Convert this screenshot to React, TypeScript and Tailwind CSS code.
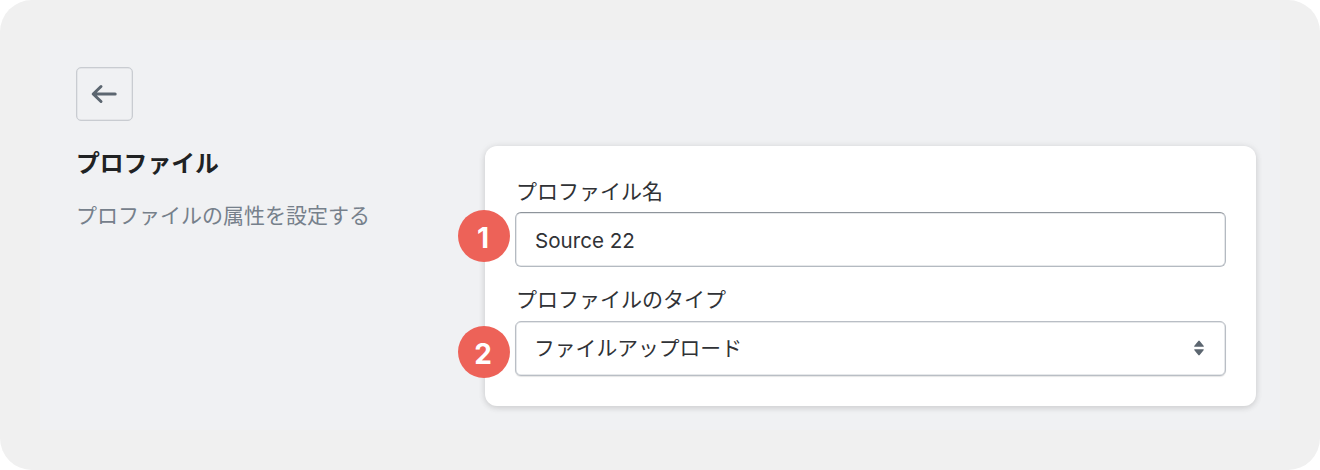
import type { ReactNode } from "react";

type FieldProps = {
    label: string;
    labelClass: string;
    children: ReactNode;
};

const Badge = ({ num, className }: { num: number; className: string }) => {
    return (
        <div
            className={`absolute left-[-57px] flex h-[52px] w-[52px] items-center justify-center rounded-full bg-[#ed6258] pr-0.5 pt-1 text-[28px] font-bold leading-none text-white ${className}`}
        >
            {num}
        </div>
    );
};

const Field = ({ label, labelClass, children }: FieldProps) => {
    return (
        <div>
            <div className={`h-7 pl-px leading-7 text-[#303236] ${labelClass}`}>{label}</div>
            <div className="relative">{children}</div>
        </div>
    );
};

const App = () => {
    return (
        <div className="h-[470px] w-[1320px] bg-white font-['Inter','Noto_Sans_CJK_JP',sans-serif] text-[21px]">
            <div className="h-full rounded-[32px] bg-[#f0f0f0] p-10">
                <div className="h-[390px] bg-[#f0f1f3] pl-9 pr-6 pt-[27px]">
                    <button
                        type="button"
                        aria-label="戻る"
                        className="flex h-[54px] w-[57px] items-center justify-center rounded-[5px] border border-[#c9ccd1] pr-0.5 shadow-[inset_0_0_0_0.5px_#d8dade]"
                    >
                        <svg width="26" height="20" viewBox="0 0 26 20" fill="none" className="text-[#5c6670]">
                            <path
                                d="M10 2.5 2.2 10l7.8 7.5M2.6 10h21.6"
                                stroke="currentColor"
                                strokeWidth="3"
                                strokeLinecap="round"
                                strokeLinejoin="round"
                            />
                        </svg>
                    </button>

                    <div className="mt-[25px] flex justify-between">
                        <div>
                            <h1 className="h-9 text-[23.8px] font-bold leading-9 text-[#202223]">プロファイル</h1>
                            <p className="mt-[18px] leading-8 text-[#76808b]">プロファイルの属性を設定する</p>
                        </div>

                        <div className="flex h-[260px] w-[771px] flex-col gap-[19px] rounded-xl bg-white pl-[30px] pr-[30px] pt-8 shadow-[0_0_8px_rgba(23,24,24,0.06),0_2px_6px_rgba(0,0,0,0.12)]">
                            <Field label="プロファイル名" labelClass="mb-1.5">
                                <Badge num={1} className="top-[-2px]" />
                                <input
                                    type="text"
                                    defaultValue="Source 22"
                                    className="block h-[55px] w-full rounded-[6px] border border-[#b4bac1] border-t-[#8e949b] bg-white px-[19px] pt-0.5 text-[20.6px] text-[#303236] shadow-[inset_0_0_0_0.5px_#cdd1d6]"
                                />
                            </Field>
                            <Field label="プロファイルのタイプ" labelClass="mb-[7px]">
                                <Badge num={2} className="top-[5px]" />
                                <button
                                    type="button"
                                    className="flex h-[55px] w-full items-center justify-between rounded-[6px] border border-[#b9bec5] bg-white pb-px pl-[18px] pr-[21px] text-[#303236] shadow-[inset_0_0_0_0.5px_#cdd1d6,0_1px_1px_rgba(0,0,0,0.1)]"
                                >
                                    <span className="pt-0.5 text-[20.8px]">ファイルアップロード</span>
                                    <svg width="10" height="16" viewBox="0 0 10 16" className="text-[#5c6670]">
                                        <path
                                            d="M.8 6.8h8.4q1 0 .4-1L5.7.9q-.7-.8-1.4 0L.4 5.8q-.6 1 .4 1ZM.8 9.2h8.4q1 0 .4 1l-3.9 4.9q-.7.8-1.4 0L.4 10.2q-.6-1 .4-1Z"
                                            fill="currentColor"
                                        />
                                    </svg>
                                </button>
                            </Field>
                        </div>
                    </div>
                </div>
            </div>
        </div>
    );
};

export default App;
